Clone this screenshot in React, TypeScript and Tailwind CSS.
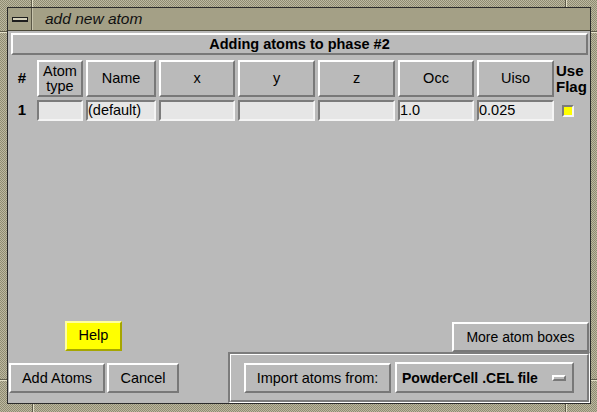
import React from "react";

const raised =
  "border-2 border-t-white border-l-white border-b-[#787878] border-r-[#787878]";
const sunken =
  "border-2 border-t-[#7c7c7c] border-l-[#7c7c7c] border-b-[#f4f4f4] border-r-[#f4f4f4]";

function Btn({
  children,
  className = "",
}: {
  children: React.ReactNode;
  className?: string;
}) {
  return (
    <div
      className={`${raised} bg-[#bababa] flex items-center justify-center text-[14.5px] text-black leading-none ${className}`}
    >
      {children}
    </div>
  );
}

function Entry({ text = "", className = "" }: { text?: string; className?: string }) {
  return (
    <div
      className={`${sunken} bg-[#e6e6e6] h-[21px] flex items-center text-[14.5px] leading-none text-black ${className}`}
    >
      {text}
    </div>
  );
}

export default function App() {
  const frame =
    "bg-[repeating-conic-gradient(#bcb8a0_0_25%,#8f8b72_0_50%)] bg-[length:2px_2px]";
  return (
    <div
      className={`relative w-[597px] h-[412px] ${frame} pl-[7px] pt-[7px] pr-[6px] pb-[8px] font-['Liberation_Sans',Arial,sans-serif] overflow-hidden`}
    >
      {/* frame resize notches */}
      <div className="absolute left-[31px] top-0 w-[1px] h-[7px] bg-[#5e5b4a]" />
      <div className="absolute left-[32px] top-0 w-[1px] h-[7px] bg-[#e4e0c8]" />
      <div className="absolute left-[565px] top-0 w-[1px] h-[7px] bg-[#5e5b4a]" />
      <div className="absolute left-[566px] top-0 w-[1px] h-[7px] bg-[#e4e0c8]" />
      <div className="absolute left-[32px] bottom-0 w-[1px] h-[8px] bg-[#5e5b4a]" />
      <div className="absolute left-[33px] bottom-0 w-[1px] h-[8px] bg-[#e4e0c8]" />
      <div className="absolute left-[565px] bottom-0 w-[1px] h-[8px] bg-[#5e5b4a]" />
      <div className="absolute left-[566px] bottom-0 w-[1px] h-[8px] bg-[#e4e0c8]" />
      <div className="absolute left-0 top-[31px] w-[7px] h-[1px] bg-[#5e5b4a]" />
      <div className="absolute left-0 top-[32px] w-[7px] h-[1px] bg-[#e4e0c8]" />
      <div className="absolute right-0 top-[31px] w-[6px] h-[1px] bg-[#5e5b4a]" />
      <div className="absolute right-0 top-[32px] w-[6px] h-[1px] bg-[#e4e0c8]" />
      <div className="absolute left-0 top-[379px] w-[7px] h-[1px] bg-[#5e5b4a]" />
      <div className="absolute left-0 top-[380px] w-[7px] h-[1px] bg-[#e4e0c8]" />
      <div className="absolute right-0 top-[379px] w-[6px] h-[1px] bg-[#5e5b4a]" />
      <div className="absolute right-0 top-[380px] w-[6px] h-[1px] bg-[#e4e0c8]" />

      <div className="h-full border border-[#2a2a2a] flex flex-col">
        {/* title bar */}
        <div className="h-[23px] flex bg-[#a4a086] border-b border-[#4a4838]">
          <div className="w-[24px] h-full flex items-center justify-center border-r border-r-[#5a5746]">
            <div className="w-[16px] h-[5px] border border-[#1e1e1e] bg-[#d6d2bc] border-b-2" />
          </div>
          <div className="w-[1px] h-full bg-[#c8c4ac]" />
          <div className="pl-[12px] flex items-center text-[15.5px] italic text-[#111] leading-none">
            add new atom
          </div>
        </div>

        {/* client */}
        <div className="flex-1 bg-[#bababa] flex flex-col">
          <div
            className={`mt-[2px] ml-[3px] mr-[2px] h-[22px] ${raised} flex items-center justify-center text-[14.5px] font-bold leading-none text-black`}
          >
            Adding atoms to phase #2
          </div>

          <div className="mt-[5px] grid grid-cols-[26px_46px_70px_76px_77px_77px_76px_77px_30px] grid-rows-[37px_21px] gap-x-[3px] gap-y-[3px]">
            <div className="flex items-center justify-center pl-[2px] text-[15px] font-bold">#</div>
            <Btn className="flex-col leading-[15px]">
              <span>Atom</span>
              <span>type</span>
            </Btn>
            <Btn>Name</Btn>
            <Btn>x</Btn>
            <Btn>y</Btn>
            <Btn>z</Btn>
            <Btn>Occ</Btn>
            <Btn>Uiso</Btn>
            <div className="flex flex-col items-start justify-center text-[15px] font-bold leading-[16px] -ml-[1px]">
              <span>Use</span>
              <span>Flag</span>
            </div>

            <div className="flex items-center justify-center pl-[2px] text-[15px] font-bold">1</div>
            <Entry />
            <Entry text="(default)" />
            <Entry />
            <Entry />
            <Entry />
            <Entry text="1.0" />
            <Entry text="0.025" />
            <div className="flex items-center pl-[5px]">
              <div className={`w-[12px] h-[12px] ${sunken} bg-[#ffff00]`} />
            </div>
          </div>

          <div className="flex-1" />

          <div className="flex h-[30px]">
            <div className="ml-[57px] w-[57px] h-[30px] border-2 border-t-[#ffff9c] border-l-[#ffff9c] border-b-[#a6a600] border-r-[#a6a600] bg-[#ffff00] flex items-center justify-center text-[14.5px]">
              Help
            </div>
            <Btn className="ml-auto mr-[1px] w-[137px] h-[30px] mt-[1px] text-[14px]">More atom boxes</Btn>
          </div>

          <div className="mt-[1px] h-[51px] flex">
            <div className="flex items-start pt-[11px] pl-[1px] gap-[2px]">
              <Btn className="w-[96px] h-[30px]">Add Atoms</Btn>
              <Btn className="w-[72px] h-[30px]">Cancel</Btn>
            </div>
            <div className="ml-auto w-[362px] h-[51px] border-t-2 border-l-2 border-t-[#7c7c7c] border-l-[#7c7c7c] border-b border-r border-b-white border-r-white">
              <div className="h-full border-t border-l border-t-white border-l-white border-b-2 border-r-2 border-b-[#7c7c7c] border-r-[#7c7c7c] flex items-start pt-[8px] pl-[13px] gap-[4px]">
                <Btn className="w-[147px] h-[30px]">Import atoms from:</Btn>
                <div
                  className={`${raised} w-[179px] h-[31px] -mt-[1px] bg-[#bababa] flex items-center pl-[5px] pr-[6px]`}
                >
                  <span className="text-[14px] font-bold leading-none">PowderCell .CEL file</span>
                  <div className="ml-auto w-[14px] h-[6px] border-2 border-t-white border-l-white border-b-[#787878] border-r-[#787878] bg-[#bababa]" />
                </div>
              </div>
            </div>
          </div>
        </div>
      </div>
    </div>
  );
}
